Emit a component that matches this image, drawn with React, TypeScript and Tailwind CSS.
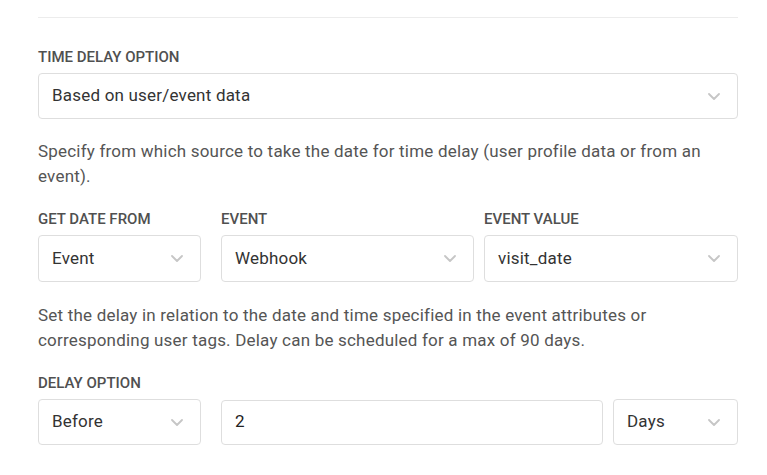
import { ReactNode } from "react";

function Chevron() {
  return (
    <svg width="12" height="7" viewBox="0 0 12 7" fill="none" className="shrink-0">
      <path d="M1 1l5 5 5-5" stroke="#c6c6c6" strokeWidth="1.8" strokeLinecap="round" strokeLinejoin="round" />
    </svg>
  );
}

function Label({ children }: { children: ReactNode }) {
  return <div className="text-[15px] leading-5 font-medium text-[#505050] mb-[6px]">{children}</div>;
}

function Select({ value, className = "" }: { value: string; className?: string }) {
  return (
    <div
      className={`h-[46px] flex items-center justify-between pl-[13px] pr-[17px] border border-[#dedede] rounded-[4px] bg-white ${className}`}
    >
      <span className="text-[17px] tracking-[0.2px] text-[#333]">{value}</span>
      <Chevron />
    </div>
  );
}

export default function App() {
  return (
    <div className="bg-white min-h-[475px] px-[38px] pt-[17px]" style={{ fontFamily: "Roboto, 'Liberation Sans', sans-serif" }}>
      <div className="w-[700px]">
        <div className="h-px bg-[#ececec]" />

        <div className="mt-[29px]">
          <Label>TIME DELAY OPTION</Label>
          <Select value="Based on user/event data" />
        </div>

        <p className="mt-[20px] text-[17px] tracking-[0.2px] leading-[25px] text-[#555]">
          Specify from which source to take the date for time delay (user profile data or from an event).
        </p>

        <div className="mt-[20px] flex">
          <div className="w-[163px]">
            <Label>GET DATE FROM</Label>
            <Select value="Event" className="h-[47px]" />
          </div>
          <div className="w-[253px] ml-[20px]">
            <Label>EVENT</Label>
            <Select value="Webhook" className="h-[47px]" />
          </div>
          <div className="w-[254px] ml-[10px]">
            <Label>EVENT VALUE</Label>
            <Select value="visit_date" className="h-[47px]" />
          </div>
        </div>

        <p className="mt-[21px] text-[17px] tracking-[0.2px] leading-[25px] text-[#555]">
          Set the delay in relation to the date and time specified in the event attributes or corresponding user tags. Delay can be scheduled for a max of 90 days.
        </p>

        <div className="mt-[20px]">
          <Label>DELAY OPTION</Label>
          <div className="flex items-center">
            <Select value="Before" className="w-[163px]" />
            <div className="w-[382px] ml-[20px] h-[45px] flex items-center px-[13px] border border-[#dedede] rounded-[4px] text-[17px] text-[#222]">
              2
            </div>
            <Select value="Days" className="w-[125px] ml-[10px]" />
          </div>
        </div>
      </div>
    </div>
  );
}
